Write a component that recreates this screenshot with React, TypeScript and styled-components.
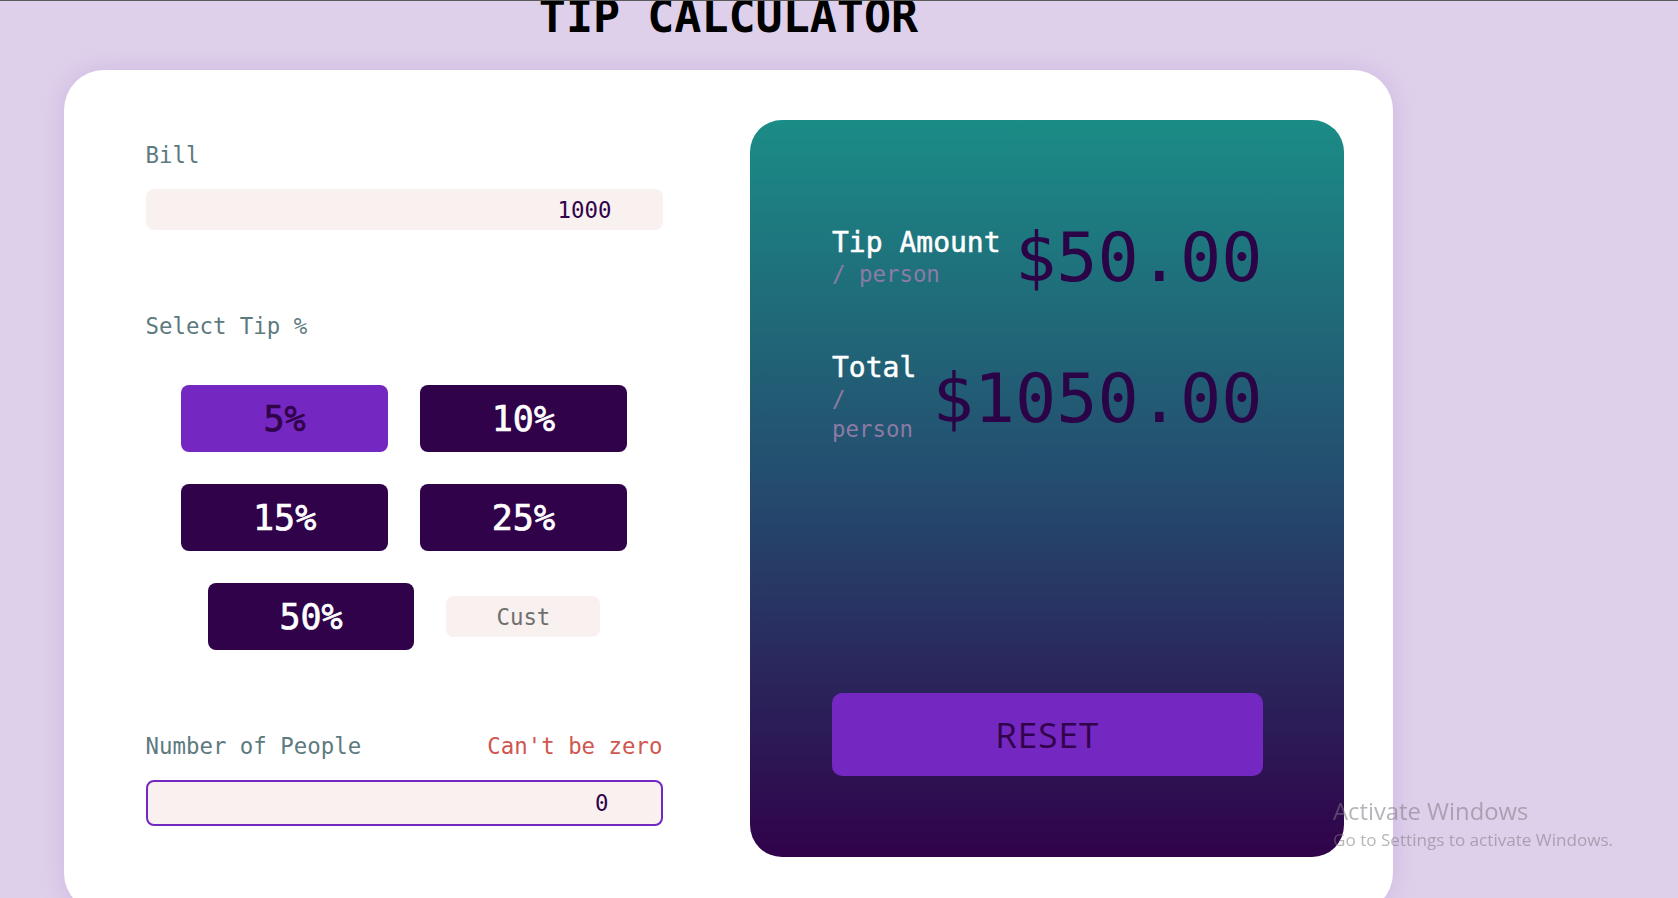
import React, { useState } from "react";
import styled, { createGlobalStyle } from "styled-components";

const GlobalStyle = createGlobalStyle`
  html { overflow: hidden; }
  body {
    margin: 0;
    border-top: 1px solid #5b5b5b;
    background: #ded0eb;
    font-family: "DejaVu Sans Mono", monospace;
  }
  * { box-sizing: border-box; }
`;

const Page = styled.div`
  width: 1329px;
  margin-left: 64px;
  display: flex;
  flex-direction: column;
`;

const Title = styled.h1`
  margin: -9.6px 0 0 0;
  height: 52px;
  line-height: 52px;
  text-align: center;
  font-family: "DejaVu Sans Mono", monospace;
  font-weight: 700;
  font-size: 45px;
  color: #000;
`;

const Card = styled.main`
  margin-top: 26.6px;
  height: 843px;
  background: #ffffff;
  border-radius: 40px;
  box-shadow: 0 0 24px rgba(150, 100, 190, 0.22);
  display: flex;
  padding: 50px 49px 56px 81.5px;
  gap: 87px;
`;

const Form = styled.section`
  width: 517px;
  flex-shrink: 0;
  display: flex;
  flex-direction: column;
  padding-top: 21.5px;
`;

const FieldLabel = styled.label<{ $gap?: number }>`
  display: block;
  margin-top: ${(p) => p.$gap ?? 0}px;
  font-size: 22.4px;
  line-height: 27px;
  color: #5d7a7f;
`;

const LabelRow = styled.div`
  margin-top: 82.5px;
  display: flex;
  justify-content: space-between;
  align-items: center;
`;

const ErrorText = styled.span`
  font-size: 22.4px;
  line-height: 27px;
  color: #cf5750;
`;

const TextInput = styled.input<{ $error?: boolean }>`
  margin-top: 20.5px;
  width: 100%;
  height: ${(p) => (p.$error ? 46 : 41)}px;
  border: ${(p) => (p.$error ? "2px solid #7527c1" : "none")};
  border-radius: 8px;
  background: #f9f1f0;
  padding: 0 ${(p) => (p.$error ? 52 : 51)}px 0 12px;
  text-align: right;
  font-family: "DejaVu Sans Mono", monospace;
  font-size: 22.4px;
  color: #30034a;
  outline: none;
`;

const TipGrid = styled.div`
  margin-top: 45.5px;
  display: flex;
  flex-wrap: wrap;
  justify-content: center;
  align-items: center;
  column-gap: 32px;
  row-gap: 32px;
`;

const TipButton = styled.button<{ $active?: boolean }>`
  width: 40%;
  height: 67px;
  border: none;
  border-radius: 8px;
  background: ${(p) => (p.$active ? "#7527c1" : "#30024a")};
  color: ${(p) => (p.$active ? "#30034a" : "#ffffff")};
  font-family: "DejaVu Sans Mono", monospace;
  font-weight: 400;
  -webkit-text-stroke: 0.7px currentColor;
  font-size: 35px;
  cursor: pointer;
`;

const CustomInput = styled.input`
  width: 154px;
  height: 41px;
  border: none;
  border-radius: 8px;
  background: #f9f1f0;
  text-align: center;
  font-family: "DejaVu Sans Mono", monospace;
  font-size: 22.4px;
  color: #30034a;
  outline: none;
  &::placeholder { color: #6f6f6f; }
`;

const Results = styled.section`
  width: 594px;
  flex-shrink: 0;
  height: 737px;
  border-radius: 32px;
  background: linear-gradient(to bottom, #1b8c86 0%, #244b6e 50%, #30024a 100%);
  padding: 98px 81px 81px 82.5px;
  display: flex;
  flex-direction: column;
`;

const ResultRow = styled.div<{ $gap?: number }>`
  margin-top: ${(p) => p.$gap ?? 0}px;
  display: flex;
  justify-content: space-between;
  align-items: center;
`;

const ResultLabel = styled.div`
  flex: 0 1 auto;
  min-width: 0;
`;

const ResultTitle = styled.div`
  font-size: 28px;
  line-height: 32px;
  font-weight: 400;
  -webkit-text-stroke: 0.5px currentColor;
  color: #ffffff;
  white-space: nowrap;
`;

const PerPerson = styled.div`
  font-size: 22.4px;
  line-height: 30px;
  color: #8c7ba3;
`;

const Amount = styled.div`
  flex-shrink: 0;
  white-space: nowrap;
  font-size: 68.5px;
  line-height: 79px;
  color: #2a0446;
`;

const ResetButton = styled.button`
  margin-top: auto;
  width: 100%;
  height: 83px;
  border: none;
  border-radius: 10px;
  background: #7527c1;
  color: #30034a;
  font-family: "Open Sans", "Noto Sans", sans-serif;
  font-size: 35px;
  letter-spacing: 1px;
  cursor: pointer;
`;

const Watermark = styled.div`
  position: fixed;
  left: 1333px;
  top: 795px;
  font-family: "Open Sans", "Liberation Sans", sans-serif;
  color: rgba(125, 120, 130, 0.55);
  pointer-events: none;
`;

const WatermarkTitle = styled.div`
  font-size: 23.8px;
  line-height: 33px;
`;

const WatermarkText = styled.div`
  font-size: 17.1px;
  line-height: 24px;
`;

const tips = [5, 10, 15, 25, 50];

export default function App() {
  const [tip, setTip] = useState(5);
  const [bill, setBill] = useState("1000");
  const [people, setPeople] = useState("0");

  return (
    <>
      <GlobalStyle />
      <Page>
        <Title>TIP CALCULATOR</Title>
        <Card>
          <Form>
            <FieldLabel>Bill</FieldLabel>
            <TextInput value={bill} onChange={(e) => setBill(e.target.value)} />
            <FieldLabel $gap={82.5}>Select Tip %</FieldLabel>
            <TipGrid>
              {tips.map((t) => (
                <TipButton key={t} $active={t === tip} onClick={() => setTip(t)}>
                  {t}%
                </TipButton>
              ))}
              <CustomInput placeholder="Cust" />
            </TipGrid>
            <LabelRow>
              <FieldLabel>Number of People</FieldLabel>
              <ErrorText>Can't be zero</ErrorText>
            </LabelRow>
            <TextInput $error value={people} onChange={(e) => setPeople(e.target.value)} />
          </Form>
          <Results>
            <ResultRow>
              <ResultLabel>
                <ResultTitle>Tip Amount</ResultTitle>
                <PerPerson>/ person</PerPerson>
              </ResultLabel>
              <Amount>$50.00</Amount>
            </ResultRow>
            <ResultRow $gap={55}>
              <ResultLabel>
                <ResultTitle>Total</ResultTitle>
                <PerPerson>/ person</PerPerson>
              </ResultLabel>
              <Amount>$1050.00</Amount>
            </ResultRow>
            <ResetButton>RESET</ResetButton>
          </Results>
        </Card>
      </Page>
      <Watermark>
        <WatermarkTitle>Activate Windows</WatermarkTitle>
        <WatermarkText>Go to Settings to activate Windows.</WatermarkText>
      </Watermark>
    </>
  );
}
